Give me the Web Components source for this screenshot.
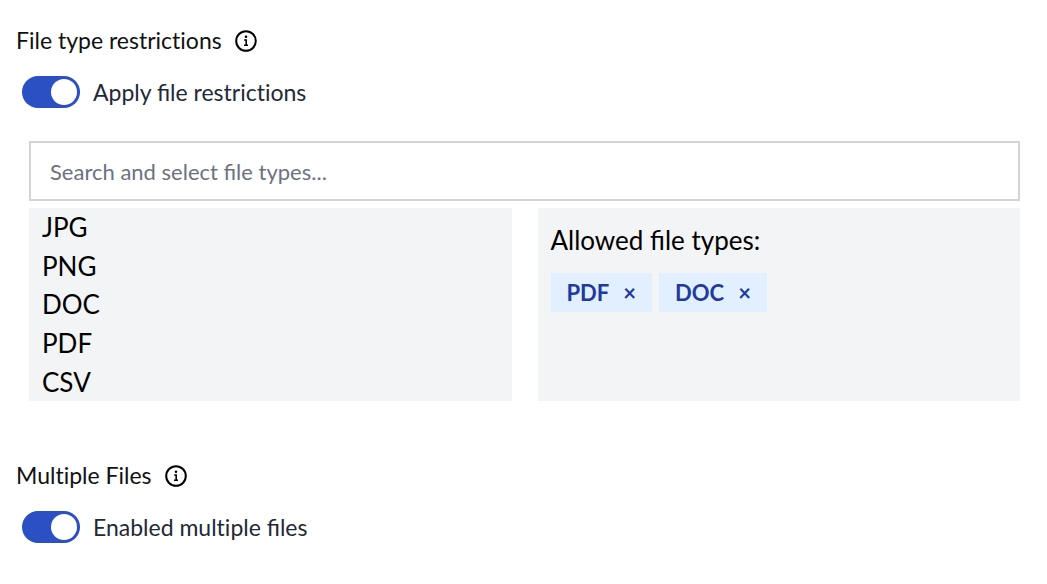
<!DOCTYPE html>
<html lang="en">
<head>
<meta charset="utf-8">
<meta name="viewport" content="width=device-width, initial-scale=1">
<title>File upload settings</title>
<style>
  body { margin: 0; background: #fff; color: #000; font-family: Lato, "Open Sans", sans-serif; font-size: 26px; line-height: 39px; }
</style>
</head>
<body>
<upload-settings></upload-settings>

<template id="info-icon">
  <style>
    :host { display: block; width: 24px; height: 24px; color: #000; }
    svg { display: block; width: 100%; height: 100%; }
  </style>
  <svg viewBox="0 0 24 24" fill="none" stroke="currentColor" stroke-width="2" role="img" aria-label="More information">
    <circle cx="12" cy="12" r="9.8"/>
    <path d="M10.2 11H12.2V16M10 16.2H14" stroke-width="1.6"/>
    <circle cx="12" cy="7.8" r="1.3" fill="currentColor" stroke="none"/>
  </svg>
</template>

<template id="toggle-switch">
  <style>
    :host { display: block; font-size: 23px; line-height: 32px; color: #1f2937; }
    label { display: flex; align-items: center; gap: 13px; width: fit-content; cursor: pointer; }
    input { appearance: none; flex: none; display: flex; align-items: center; box-sizing: border-box; width: 58px; height: 32px; margin: 0; padding: 0 3px; border-radius: 16px; background: #9ca3af; cursor: pointer; }
    input::before { content: ""; width: 26px; height: 26px; border-radius: 50%; background: #fff; }
    input:checked { justify-content: flex-end; background: #2a50c4; }
    input:focus-visible { outline: 2px solid #93b4f5; outline-offset: 2px; }
  </style>
  <label><input type="checkbox" role="switch" checked><span><slot></slot></span></label>
</template>

<template id="setting-section">
  <style>
    :host { display: block; }
    header { display: flex; align-items: center; gap: 12px; padding-left: 16px; }
    h2 { margin: 0; font-size: 23px; line-height: 31px; font-weight: 400; color: #111; font-variant-ligatures: none; }
    .body { padding: 20px 27px 0 22px; }
  </style>
  <section>
    <header><h2><slot name="title"></slot></h2><info-icon></info-icon></header>
    <div class="body"><slot></slot></div>
  </section>
</template>

<template id="type-chip">
  <style>
    :host { display: flex; align-items: center; gap: 14px; height: 39px; padding: 0 16px; box-sizing: border-box; background: #e1effe; color: #1e3a9f; font-size: 22px; font-weight: 700; }
    button { margin: 0; padding: 0; border: 0; background: none; color: inherit; font: inherit; cursor: pointer; }
  </style>
  <span><slot></slot></span><button type="button" aria-label="Remove">×</button>
</template>

<template id="file-type-picker">
  <style>
    :host { display: block; padding: 33px 0 0 7px; }
    input { display: block; box-sizing: border-box; width: 100%; height: 60px; margin: 0 0 7px; padding: 0 19px; border: 2px solid #d1d5db; border-radius: 0; background: #fff; color: #111; font: inherit; font-size: 22px; }
    input::placeholder { color: #6b7280; opacity: 1; }
    .panels { display: grid; grid-template-columns: 1fr 1fr; gap: 26px; min-height: 193px; }
    .panel { background: #f3f4f6; }
    ul { display: grid; grid-auto-rows: 1fr; align-items: center; list-style: none; margin: 0; padding: 0 13px; }
    li { line-height: 38px; }
    li[hidden] { display: none; }
    .allowed { padding: 13px; }
    p { margin: 0 0 13px; }
    .chips { display: flex; flex-wrap: wrap; gap: 7px; }
  </style>
  <input type="text" placeholder="Search and select file types..." aria-label="Search and select file types">
  <div class="panels">
    <ul class="panel"><li>JPG</li><li>PNG</li><li>DOC</li><li>PDF</li><li>CSV</li></ul>
    <div class="panel allowed">
      <p>Allowed file types:</p>
      <div class="chips"><type-chip>PDF</type-chip><type-chip>DOC</type-chip></div>
    </div>
  </div>
</template>

<template id="upload-settings">
  <style>
    :host { display: flex; flex-direction: column; gap: 59px; padding: 25px 0; }
    .plain { font-variant-ligatures: none; }
  </style>
  <setting-section>
    <span slot="title">File type restrictions</span>
    <toggle-switch>Apply file <span class="plain">restrictions</span></toggle-switch>
    <file-type-picker></file-type-picker>
  </setting-section>
  <setting-section>
    <span slot="title">Multiple Files</span>
    <toggle-switch>Enabled <span class="plain">multiple</span> files</toggle-switch>
  </setting-section>
</template>

<script>
  class TemplateElement extends HTMLElement {
    constructor() {
      super();
      this.attachShadow({ mode: "open" })
        .append(document.getElementById(this.localName).content.cloneNode(true));
    }
  }
  customElements.define("info-icon", class extends TemplateElement {});
  customElements.define("toggle-switch", class extends TemplateElement {});
  customElements.define("setting-section", class extends TemplateElement {});
  customElements.define("type-chip", class extends TemplateElement {
    connectedCallback() {
      this.shadowRoot.querySelector("button").onclick = () => this.remove();
    }
  });
  customElements.define("file-type-picker", class extends TemplateElement {
    connectedCallback() {
      const items = this.shadowRoot.querySelectorAll("li");
      this.shadowRoot.querySelector("input").oninput = (e) => {
        const query = e.target.value.trim().toLowerCase();
        for (const item of items) item.hidden = !item.textContent.toLowerCase().includes(query);
      };
    }
  });
  customElements.define("upload-settings", class extends TemplateElement {});
</script>
</body>
</html>
